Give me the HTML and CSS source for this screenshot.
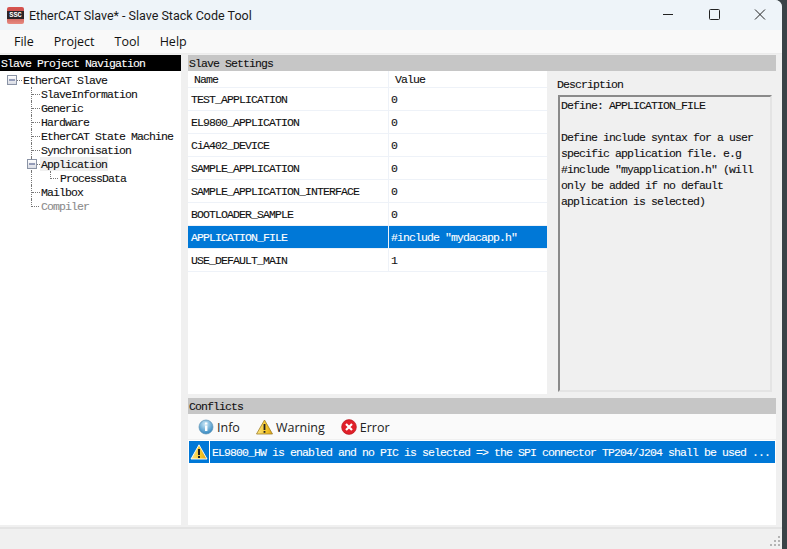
FILE: index.html
```html
<!DOCTYPE html>
<html lang="en">
<head>
<meta charset="utf-8">
<title>EtherCAT Slave* - Slave Stack Code Tool</title>
<link rel="stylesheet" href="styles.css">
</head>
<body>
<div class="window">
  <header class="titlebar">
    <div class="logo"><span>SSC</span></div>
    <div class="title">EtherCAT Slave* - Slave Stack Code Tool</div>
    <div class="controls">
      <svg class="ctl" width="46" height="30" viewBox="0 0 46 30"><path d="M18 14.5h10" stroke="#222" fill="none"/></svg>
      <svg class="ctl" width="46" height="30" viewBox="0 0 46 30"><rect x="18.5" y="9.5" width="10" height="10" rx="1" stroke="#222" fill="none"/></svg>
      <svg class="ctl" width="46" height="30" viewBox="0 0 46 30"><path d="M18 9.5l10 10M28 9.5l-10 10" stroke="#222" fill="none"/></svg>
    </div>
  </header>
  <nav class="menubar">
    <span>File</span><span>Project</span><span>Tool</span><span>Help</span>
  </nav>
  <main class="body">
    <aside class="side">
      <div class="nav-head mono">Slave Project Navigation</div>
      <div class="tree mono">
        <div class="node root"><i class="box"></i><i class="dash"></i><span>EtherCAT Slave</span></div>
        <div class="node"><i class="elbow"></i><span>SlaveInformation</span></div>
        <div class="node"><i class="elbow"></i><span>Generic</span></div>
        <div class="node"><i class="elbow"></i><span>Hardware</span></div>
        <div class="node"><i class="elbow"></i><span>EtherCAT State Machine</span></div>
        <div class="node"><i class="elbow"></i><span>Synchronisation</span></div>
        <div class="node"><i class="elbow"><i class="box inner"></i></i><span class="picked">Application</span></div>
        <div class="node"><i class="elbow only-line"></i><i class="elbow sub last"></i><span>ProcessData</span></div>
        <div class="node"><i class="elbow"></i><span>Mailbox</span></div>
        <div class="node off"><i class="elbow last"></i><span>Compiler</span></div>
      </div>
    </aside>
    <section class="content">
      <div class="sec-head mono">Slave Settings</div>
      <div class="upper">
        <div class="table mono">
          <div class="row head"><span>Name</span><span>Value</span></div>
          <div class="row"><span>TEST_APPLICATION</span><span>0</span></div>
          <div class="row"><span>EL9800_APPLICATION</span><span>0</span></div>
          <div class="row"><span>CiA402_DEVICE</span><span>0</span></div>
          <div class="row"><span>SAMPLE_APPLICATION</span><span>0</span></div>
          <div class="row"><span>SAMPLE_APPLICATION_INTERFACE</span><span>0</span></div>
          <div class="row"><span>BOOTLOADER_SAMPLE</span><span>0</span></div>
          <div class="row sel"><span>APPLICATION_FILE</span><span>#include "mydacapp.h"</span></div>
          <div class="row"><span>USE_DEFAULT_MAIN</span><span>1</span></div>
        </div>
        <div class="desc mono">
          <div class="desc-label">Description</div>
          <div class="desc-box">
            <p>Define: APPLICATION_FILE</p>
            <p>Define include syntax for a user specific application file. e.g #include "myapplication.h" (will only be added if no default application is selected)</p>
          </div>
        </div>
      </div>
      <div class="sec-head conflicts mono">Conflicts</div>
      <div class="toolbar">
        <span class="tool"><svg width="16" height="16" viewBox="0 0 16 16"><defs><radialGradient id="g" cx=".45" cy=".3" r=".8"><stop offset="0" stop-color="#cfeaf8"/><stop offset="1" stop-color="#1b78b8"/></radialGradient></defs><circle cx="8" cy="8" r="7" fill="url(#g)" stroke="#5f93b5" stroke-width=".7"/><rect x="7" y="6.5" width="2.4" height="5.5" fill="#fff"/><rect x="7" y="3.5" width="2.4" height="2" fill="#fff"/></svg>Info</span>
        <span class="tool"><svg width="17" height="16" viewBox="0 0 17 16"><defs><linearGradient id="w" x1="0" x2="1" y1="0" y2="0"><stop offset="0" stop-color="#fbe58a"/><stop offset=".6" stop-color="#f5c728"/><stop offset="1" stop-color="#d9a01a"/></linearGradient></defs><path d="M8.5 1L16.5 15H.5z" fill="url(#w)" stroke="#a07f28" stroke-width=".8" stroke-linejoin="round"/><rect x="7.6" y="5" width="1.8" height="6" fill="#222"/><rect x="7.6" y="12" width="1.8" height="1.8" fill="#222"/></svg>Warning</span>
        <span class="tool"><svg width="16" height="16" viewBox="0 0 16 16"><circle cx="8" cy="8" r="7.4" fill="#e0202a" stroke="#b3161d" stroke-width=".6"/><path d="M5 5l6 6M11 5l-6 6" stroke="#fff" stroke-width="2.2"/></svg>Error</span>
      </div>
      <div class="list mono">
        <div class="item">
          <span class="item-icon"><svg width="18" height="16" viewBox="0 0 18 16"><path d="M9 .8L17 15H1z" fill="url(#w)" stroke="#fff" stroke-width=".9" stroke-linejoin="round"/><rect x="8" y="5" width="2" height="6" fill="#222"/><rect x="8" y="12" width="2" height="2" fill="#222"/></svg></span>
          <span class="item-text">EL9800_HW is enabled and no PIC is selected =&gt; the SPI connector TP204/J204 shall be used ...</span>
        </div>
      </div>
    </section>
  </main>
  <footer class="status">
    <svg class="grip" width="12" height="12" viewBox="0 0 12 12" fill="#b4b4b4"><rect x="9" y="1" width="2" height="2"/><rect x="5" y="5" width="2" height="2"/><rect x="9" y="5" width="2" height="2"/><rect x="1" y="9" width="2" height="2"/><rect x="5" y="9" width="2" height="2"/><rect x="9" y="9" width="2" height="2"/></svg>
  </footer>
</div>
</body>
</html>
```
FILE: styles.css
```css
* { box-sizing: border-box; }
html, body { margin: 0; height: 100%; overflow: hidden; }
body { background: #3a4347; }
.window {
  width: 782px; height: 549px; display: flex; flex-direction: column;
  background: #f0f0f0; border-top-right-radius: 7px; overflow: hidden;
  font-family: "Open Sans", "Noto Sans", sans-serif;
}
.mono {
  font-family: "Liberation Mono", monospace; font-size: 11.5px; letter-spacing: -.9px;
  color: #111; -webkit-text-stroke: .1px currentColor;
}
.titlebar { height: 30px; flex: none; display: flex; align-items: center; background: #eef4f9; }
.logo {
  width: 17px; height: 17px; margin: 0 5px 0 7px; background: linear-gradient(#d9534f, #c0504d 40%, #e88a80); border-radius: 2px;
  display: flex; align-items: center; justify-content: center; overflow: hidden;
}
.logo span { font: bold 7px "Liberation Mono", monospace; color: #fff; background: #2a2226; width: 100%; text-align: center; line-height: 8px; }
.title { font-family: Roboto, sans-serif; font-size: 12.5px; color: #1a1a1a; flex: 1; white-space: nowrap; }
.controls { display: flex; margin-right: -1px; }
.ctl { display: block; }
.menubar {
  height: 24px; flex: none; display: flex; align-items: center; gap: 20px; padding: 0 14px 1px;
  background: #f9f9f9; font-size: 12.5px; color: #111; border-bottom: 1px solid #ececec;
}
.body { flex: 1; min-height: 0; display: flex; padding-top: 1px; }
.side { width: 181px; flex: none; display: flex; flex-direction: column; margin-right: 7px; }
.nav-head { height: 16px; line-height: 17px; background: #000; color: #fff; padding-left: 1px; white-space: nowrap; }
.tree { flex: 1; background: #fff; padding-top: 2px; }
.node { height: 14px; line-height: 15px; display: flex; align-items: stretch; white-space: nowrap; }
.node > span { padding: 0 1px; }
.root { padding-left: 7px; align-items: center; }
.box {
  display: block; width: 10px; height: 10px; border: 1px solid #8a93a5; position: relative;
  background: linear-gradient(#fff, #d9dce4); flex: none;
}
.box::after { content: ""; position: absolute; left: 1px; right: 1px; top: 3px; height: 2px; background: #3c4a80; transform: scaleY(.5); }
.dash { display: block; width: 5px; border-bottom: 1px dotted #777; flex: none; }
.elbow { display: block; position: relative; width: 9px; margin-left: 31px; flex: none; border-left: 1px dotted #777; }
.elbow::after { content: ""; position: absolute; left: 0; width: 8px; top: 7px; border-top: 1px dotted #777; }
.elbow.last { border-left: 0; }
.elbow.last::before { content: ""; position: absolute; left: 0; top: 0; height: 8px; border-left: 1px dotted #777; }
.only-line::after { display: none; }
.only-line { width: 19px; }
.elbow.sub { margin-left: 0; }
.only-line + .elbow.sub { margin-left: 0; }
.inner { position: absolute; left: -5px; top: 2px; z-index: 1; }
.picked { background: #f0f0f0; }
.off { color: #8c8c8c; }
.content { flex: 1; min-width: 0; display: flex; flex-direction: column; margin-right: 6px; }
.sec-head { height: 16px; line-height: 17px; background: #c6c6c6; padding-left: 1px; flex: none; }
.upper { height: 323px; flex: none; display: flex; }
.table { width: 360px; flex: none; background: #fff; border-right: 1px solid #f0f0f0; }
.row { height: 23px; line-height: 23px; display: grid; grid-template-columns: 200px 1fr; border-bottom: 1px solid #eef2f8; white-space: nowrap; }
.row > span { padding-left: 3px; }
.row > span + span { border-left: 1px solid #eef2f8; padding-left: 2px; }
.row.head { height: 17px; line-height: 17px; }
.row.head > span { padding-left: 6px; }
.row.sel { background: #0078d7; color: #fff; }
.desc { flex: 1; min-width: 0; display: flex; flex-direction: column; padding: 6px 4px 2px 9px; background: #f0f0f0; }
.desc-label { height: 18px; line-height: 15px; padding-left: 0; }
.desc-box { flex: 1; margin-left: 1px; border: 2px solid #8a8a8a; border-right-color: #e4e4e4; border-bottom-color: #e4e4e4; padding: 1px 1px 0 1px; line-height: 16px; background: #f0f0f0; }
.desc-box p { margin: 0 0 16px; }
.conflicts { margin-top: 4px; }
.toolbar { height: 26px; flex: none; display: flex; align-items: center; gap: 16px; padding: 2px 0 0 10px; background: #fafafa; font-size: 12.5px; color: #222; border-bottom: 1px solid #f0f0f0; }
.tool { display: flex; align-items: center; gap: 3px; }
.tool svg { margin-top: -2px; }
.list { flex: 1; background: #fff; padding-top: 1px; }
.item { height: 22px; display: flex; align-items: stretch; background: #0078d7; color: #fff; line-height: 23px; margin-left: 1px; margin-right: 1px; white-space: nowrap; }
.item-icon { width: 21px; flex: none; display: flex; align-items: center; justify-content: center; border-right: 1px solid #fff; }
.item-text { padding-left: 2px; }
.status { height: 22px; flex: none; border-top: 2px solid #e4e4e4; margin-top: 2px; position: relative; background: #f0f0f0; }
.grip { position: absolute; right: 1px; bottom: 2px; }
```
